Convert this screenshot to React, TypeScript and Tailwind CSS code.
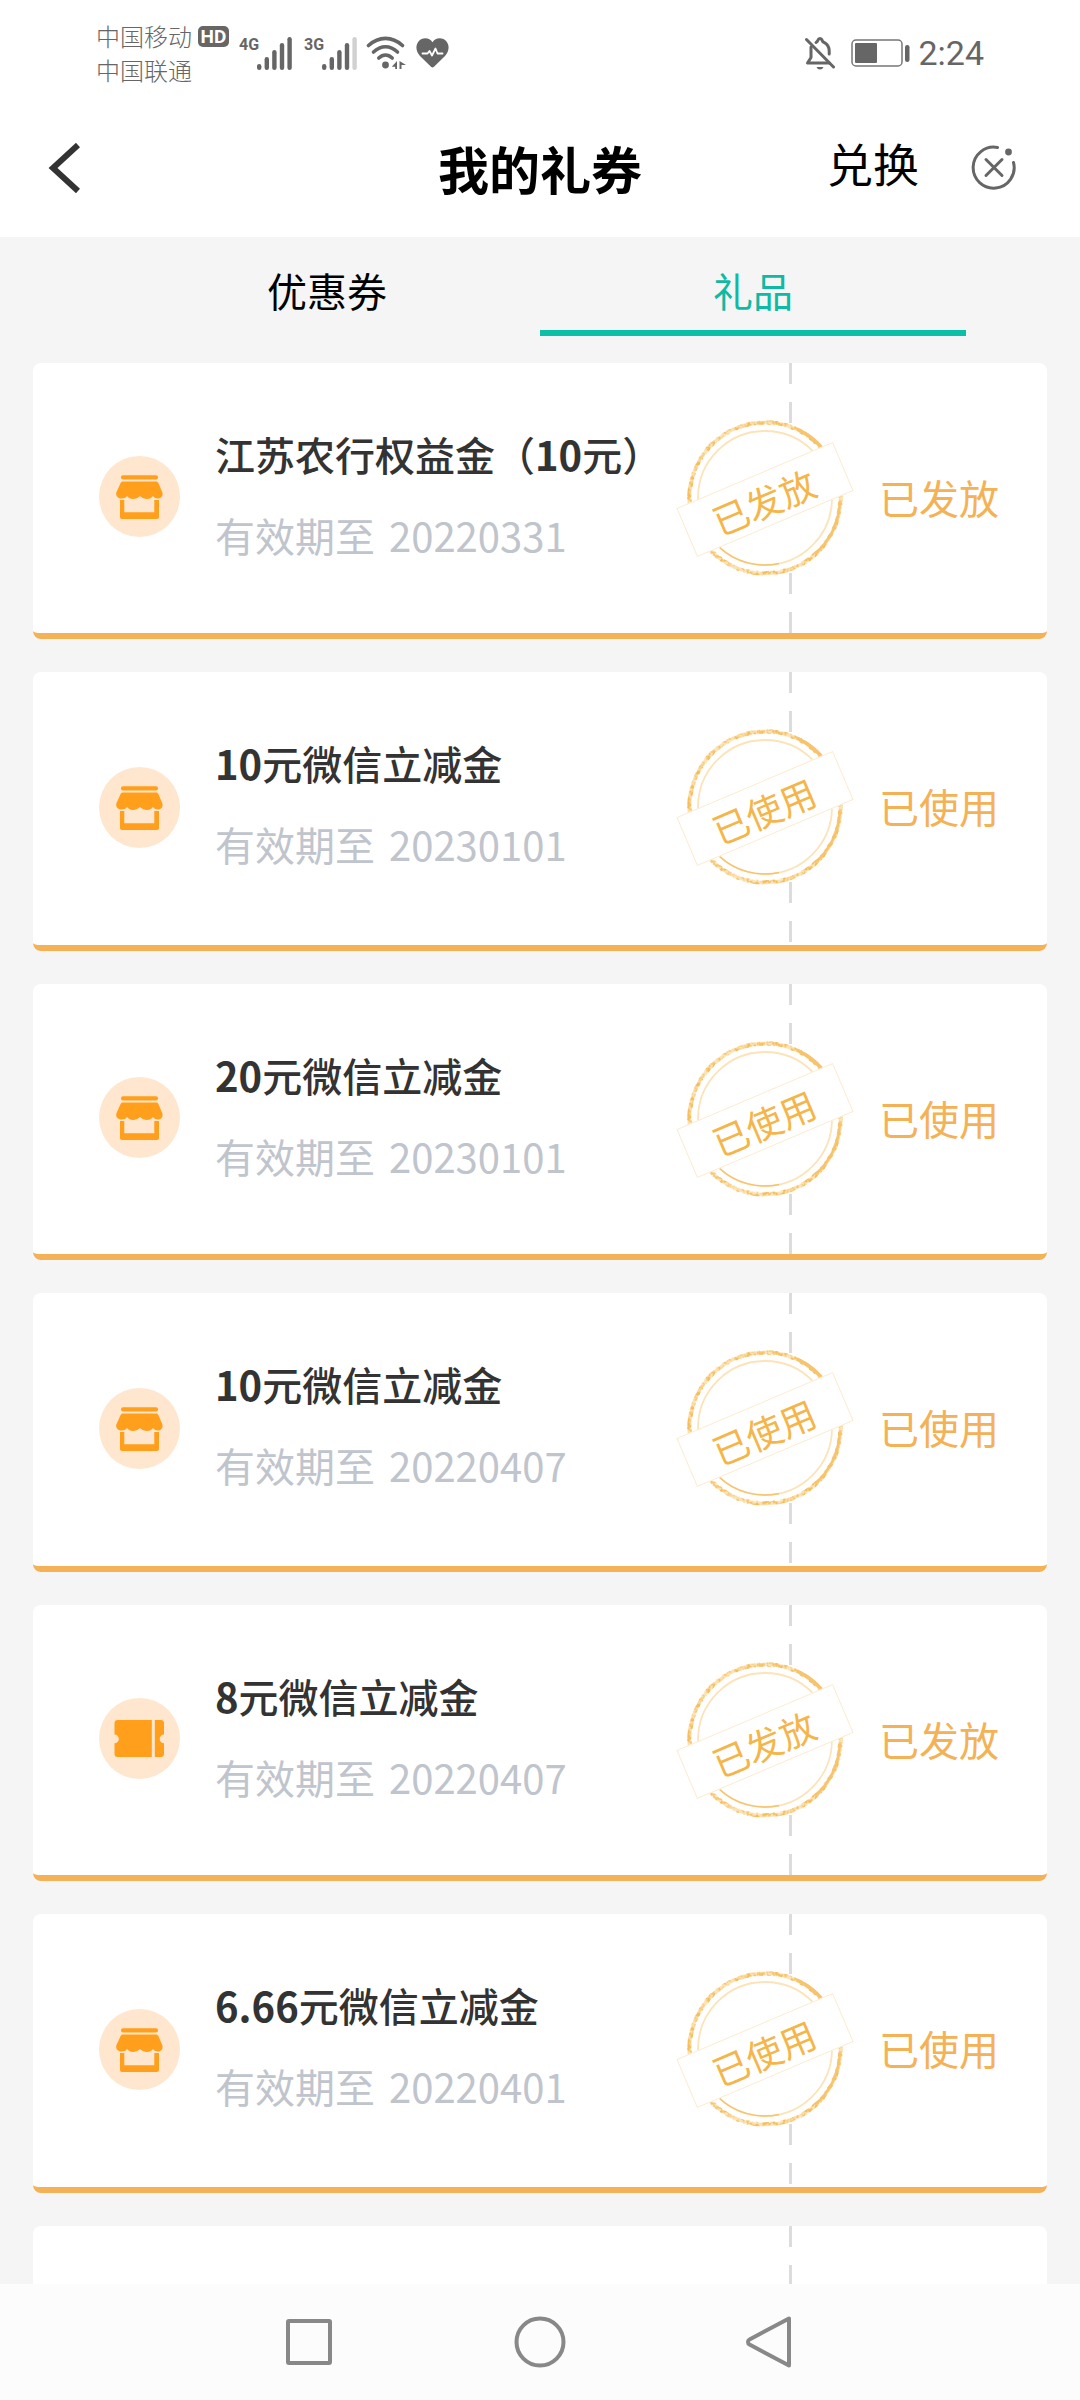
import type { ReactNode } from "react";

type Status = "已发放" | "已使用";

interface Gift {
  id: number;
  icon: "store" | "ticket";
  title: string;
  expires: string;
  status: Status;
}

const gifts: Gift[] = [
  { id: 1, icon: "store", title: "江苏农行权益金（10元）", expires: "20220331", status: "已发放" },
  { id: 2, icon: "store", title: "10元微信立减金", expires: "20230101", status: "已使用" },
  { id: 3, icon: "store", title: "20元微信立减金", expires: "20230101", status: "已使用" },
  { id: 4, icon: "store", title: "10元微信立减金", expires: "20220407", status: "已使用" },
  { id: 5, icon: "ticket", title: "8元微信立减金", expires: "20220407", status: "已发放" },
  { id: 6, icon: "store", title: "6.66元微信立减金", expires: "20220401", status: "已使用" },
];

function SignalBars({ label, level }: { label: string; level: number }) {
  const tops = [27, 20, 13, 6, 0];
  return (
    <span className="flex items-start">
      <span className="w-[18px] font-[Roboto,sans-serif] text-[16px] leading-4 font-bold">{label}</span>
      <svg width="35" height="33" viewBox="0 0 35 33" fill="#666" aria-hidden="true">
        {tops.map((top, i) => (
          <rect key={top} x={i * 7.6} y={top} width="4.4" height={33 - top} rx="2.2" opacity={i < level ? 1 : 0.3} />
        ))}
      </svg>
    </span>
  );
}

function WifiIcon() {
  return (
    <svg width="41" height="34" viewBox="0 0 41 34" fill="none" stroke="#666" strokeWidth="3.6" strokeLinecap="round" aria-hidden="true">
      <path d="M2.500 9.500C13 0 26 0 36.500 9.500" />
      <path d="M7.500 16C15 9 24 9 31.500 16" />
      <path d="M12.800 22C17 18 22 18 26.200 22" />
      <circle cx="19.500" cy="29" r="3.400" fill="#666" stroke="none" />
      <path d="M31 25v8h-1.800v-2.200H25.800z M33.500 25l6.500 4h-4.500v4h-2z" fill="#666" stroke="none" />
    </svg>
  );
}

function HeartIcon() {
  return (
    <svg width="33" height="30" viewBox="0 0 33 30" aria-hidden="true">
      <path d="M16.500 4.200C19.500-1 27-1 30.500 3.500c3.500 4.600 2.300 10-1.500 14.500L18 28.800c-1 .9-2 .9-3 0L4 18C.2 13.500-1 8.100 2.500 3.500 6-1 13.500-1 16.500 4.200z" fill="#666" />
      <path d="M6.500 15.500h5l2-2.500 2.500 4.500 3.500-7 2 5h5" fill="none" stroke="#fff" strokeWidth="1.800" strokeLinejoin="round" strokeLinecap="round" />
    </svg>
  );
}

function MutedBellIcon() {
  return (
    <svg width="30" height="34" viewBox="0 0 30 34" fill="none" stroke="#666" strokeWidth="3" strokeLinecap="round" strokeLinejoin="round" aria-hidden="true">
      <path d="M6 11v10.500L2.500 27h22" />
      <path d="M11 6.500c1-.6 1.500-1 2-2.500.6-2 3.400-2 4 0 .4 1.400.9 1.900 2 2.400 3.300 1.700 5.200 4.800 5.200 8.600v3" />
      <path d="M1.500 3.500 28.500 31" />
      <path d="M11.500 31h7c-.7 1.700-2 2.500-3.500 2.500s-2.800-.8-3.500-2.500z" fill="#666" stroke="none" />
    </svg>
  );
}

function BatteryIcon() {
  return (
    <svg width="59" height="28" viewBox="0 0 59 28" aria-hidden="true">
      <rect x="1" y="1" width="50" height="26" rx="4" fill="none" stroke="#777" strokeWidth="1.500" />
      <rect x="4" y="4" width="22" height="20" rx="1" fill="#666" />
      <rect x="54" y="6" width="4.500" height="17" rx="2.200" fill="#666" />
    </svg>
  );
}

function StatusBar() {
  return (
    <div className="flex h-[106px] shrink-0 items-center justify-between bg-white pr-[96px] pl-[96px] text-[#666]">
      <div className="flex items-center">
        <div>
          <div className="flex items-center gap-[6px]">
            <span className="text-[24px] leading-[34px] font-light">中国移动</span>
            <span className="flex h-[21px] w-[31px] items-center justify-center rounded-[5px] bg-[#666] font-[Roboto,sans-serif] text-[19px] leading-none font-bold text-white">
              HD
            </span>
          </div>
          <div className="text-[24px] leading-[34px] font-light">中国联通</div>
        </div>
        <div className="ml-[10px] flex items-center gap-[9px]">
          <div className="flex gap-3">
            <SignalBars label="4G" level={5} />
            <SignalBars label="3G" level={4} />
          </div>
          <WifiIcon />
          <HeartIcon />
        </div>
      </div>
      <div className="flex items-center">
        <MutedBellIcon />
        <span className="ml-4">
          <BatteryIcon />
        </span>
        <time className="ml-2 font-[Roboto,sans-serif] text-[34px] leading-10">2:24</time>
      </div>
    </div>
  );
}

function Header() {
  return (
    <header className="grid h-[131px] shrink-0 grid-cols-[1fr_auto_1fr] items-center bg-white px-12 pb-2">
      <button type="button" aria-label="返回" className="justify-self-start">
        <svg width="32" height="50" viewBox="0 0 32 50" fill="none" stroke="#333" strokeWidth="6" aria-hidden="true">
          <path d="M30 2 5 25 30 48" />
        </svg>
      </button>
      <h1 className="text-[51px] leading-[60px] font-bold text-black">我的礼券</h1>
      <div className="mr-4 flex items-center gap-[52px] justify-self-end">
        <button type="button" className="pb-3 text-[46px] leading-[56px] text-black">
          兑换
        </button>
        <button type="button" aria-label="关闭">
          <svg width="45" height="45" viewBox="0 0 45 45" fill="none" stroke="#666" strokeWidth="3" strokeLinecap="round" aria-hidden="true">
            <path d="M26.500 2.500A20.500 20.500 0 1 0 42.500 17.500" />
            <path d="M15 14.500l16 16M31 14.500l-16 16" />
            <circle cx="37.500" cy="7" r="3.400" fill="#666" stroke="none" />
          </svg>
        </button>
      </div>
    </header>
  );
}

function Tabs() {
  return (
    <div role="tablist" className="flex shrink-0 px-[114px] text-[40px] leading-[60px]">
      <button type="button" role="tab" aria-selected="false" className="flex-1 border-b-6 border-transparent pt-[23px] pb-[10px] text-black">
        优惠券
      </button>
      <button type="button" role="tab" aria-selected="true" className="flex-1 border-b-6 border-[#0bbfa8] pt-[23px] pb-[10px] text-[#0fb9a3]">
        礼品
      </button>
    </div>
  );
}

function GiftIcon({ kind }: { kind: Gift["icon"] }) {
  return (
    <svg className="shrink-0" width="81" height="81" viewBox="0 0 81 81" aria-hidden="true">
      <circle cx="40.500" cy="40.500" r="40.500" fill="#ffe7cf" />
      {kind === "store" ? (
        <g fill="#ff9f1c">
          <rect x="22" y="19.300" width="37" height="4.300" rx="2" />
          <path d="M24 25.500h33c1.200 0 2 .5 2.400 1.600l4 9.400c.8 3.500-1.200 6-4.400 6-2 0-3.600-.7-5-2.500-1.500 2-3.500 3-6 3s-5-1-7-3c-2 2-4.500 3-7 3s-4.500-1-6-3c-1.400 1.800-3 2.500-5.500 2.500-3.700 0-5.900-2.500-5.200-6l4.300-9.400c.4-1.100 1.200-1.600 2.400-1.600z" />
          <path d="M21 44h4.300v12.300h30V44H60v17c0 1.200-.8 2-2 2H23c-1.200 0-2-.8-2-2z" />
        </g>
      ) : (
        <g fill="#ff9f1c">
          <path d="M18.500 22H52.800v37H18.500c-1.700 0-3-1.300-3-3V45.200a4.300 4.300 0 0 0 0-8.600V25c0-1.700 1.300-3 3-3z" />
          <path d="M55.800 22H62c1.700 0 3 1.300 3 3v11.600a4.300 4.300 0 0 0 0 8.600V56c0 1.700-1.300 3-3 3h-6.200z" />
        </g>
      )}
    </svg>
  );
}

function Stamp({ label }: { label: Status }) {
  return (
    <div className="absolute top-[55px] right-[192px] h-[160px] w-[180px]">
      <svg width="180" height="160" viewBox="0 0 180 160" fill="none" aria-hidden="true">
        <defs>
          <filter id="worn-ink" x="0" y="0" width="180" height="160" filterUnits="userSpaceOnUse">
            <feTurbulence type="fractalNoise" baseFrequency="0.25" numOctaves="2" seed="4" />
            <feColorMatrix values="0 0 0 0 0  0 0 0 0 0  0 0 0 0 0  4 0 0 0 -1.600" />
            <feComposite in="SourceGraphic" operator="in" />
          </filter>
        </defs>
        <circle cx="90" cy="80" r="78" fill="#fff" />
        <circle cx="90" cy="80" r="75.500" stroke="#fce3b4" strokeWidth="3.500" />
        <circle cx="90" cy="80" r="67" stroke="#fce3b8" strokeWidth="1.800" />
        <g filter="url(#worn-ink)" stroke="#f6bd5c">
          <circle cx="90" cy="80" r="75.500" strokeWidth="4.500" />
        </g>
        <g stroke="#f7c36c">
          <path d="M122 11a76 76 0 0 1 26 20" strokeWidth="3.500" />
          <path d="M165 84a76 76 0 0 1-25 52" strokeWidth="2.500" />
          <path d="M44 129a67 67 0 0 0 60 16.500" strokeWidth="1.500" />
        </g>
      </svg>
      <div className="absolute top-[55px] left-[5px] flex h-[53px] w-[170px] -rotate-[23deg] items-center justify-center border border-[#fdebd0] bg-white pr-1 text-[36px] leading-none text-[#f5b549]">
        {label}
      </div>
    </div>
  );
}

function GiftTitle({ text }: { text: string }) {
  return (
    <h2 className="font-medium text-[#333]">
      {text.split(/([\d.]+)/).map((part, i) =>
        i % 2 === 1 ? (
          <span key={i} className="font-bold">
            {part}
          </span>
        ) : (
          part
        ),
      )}
    </h2>
  );
}

function GiftCard({ gift }: { gift: Gift }) {
  return (
    <li className="relative flex min-h-[276px] overflow-hidden rounded-lg border-b-6 border-[#f4b155] bg-white even:min-h-[279px]">
      <div className="flex min-w-0 flex-1 items-start pl-[66px]">
        <span className="flex items-center self-stretch pb-[3px]">
          <GiftIcon kind={gift.icon} />
        </span>
        <div className="flex flex-col gap-[21px] pt-[61px] pl-[35px] text-[40px] leading-[60px] whitespace-nowrap">
          <GiftTitle text={gift.title} />
          <p className="flex gap-[14px] text-[#c0c4cc]">
            <span>有效期至</span>
            <time>{gift.expires}</time>
          </p>
        </div>
      </div>
      <div className="flex h-[270px] w-[258px] shrink-0 items-center">
        <DashedLine />
        <span className="pb-[3px] pl-[87px] text-[40px] leading-[60px] text-[#f4b155]">{gift.status}</span>
      </div>
      <Stamp label={gift.status} />
    </li>
  );
}

function DashedLine() {
  return (
    <span className="flex h-full w-[3px] flex-col justify-between" aria-hidden="true">
      <span className="flex flex-col gap-[18px]">
        <Dash />
        <Dash />
      </span>
      <span className="flex flex-col gap-[18px]">
        <Dash />
        <Dash />
      </span>
    </span>
  );
}

function Dash() {
  return <span className="block h-[21px] w-[3px] bg-[#dcdcde]" />;
}

function NavButton({ label, children }: { label: string; children: ReactNode }) {
  return (
    <button type="button" aria-label={label}>
      <svg width="54" height="54" viewBox="0 0 54 54" fill="none" stroke="#888" strokeWidth="4" strokeLinejoin="round" aria-hidden="true">
        {children}
      </svg>
    </button>
  );
}

function SystemNav() {
  return (
    <nav className="flex h-[116px] shrink-0 items-center justify-center gap-[177px] bg-[#fcfcfc]">
      <NavButton label="最近任务">
        <rect x="6" y="6" width="42" height="42" rx="1" />
      </NavButton>
      <NavButton label="主屏幕">
        <circle cx="27" cy="27" r="23.500" />
      </NavButton>
      <NavButton label="返回上一级">
        <path d="M45 3.500v47L5.500 29.500c-2-1-2-4 0-5z" />
      </NavButton>
    </nav>
  );
}

export default function App() {
  return (
    <div className="flex h-screen flex-col bg-[#f5f5f5] font-['Noto_Sans_CJK_SC',sans-serif]">
      <StatusBar />
      <Header />
      <Tabs />
      <main className="min-h-0 flex-1 overflow-y-auto px-[33px] pt-[27px] [scrollbar-width:none]">
        <ul className="flex flex-col gap-[33px]">
          {gifts.map((gift) => (
            <GiftCard key={gift.id} gift={gift} />
          ))}
          <li className="h-[276px] rounded-lg bg-white pr-[255px]">
            <span className="flex h-full justify-end">
              <DashedLine />
            </span>
          </li>
        </ul>
      </main>
      <SystemNav />
    </div>
  );
}
